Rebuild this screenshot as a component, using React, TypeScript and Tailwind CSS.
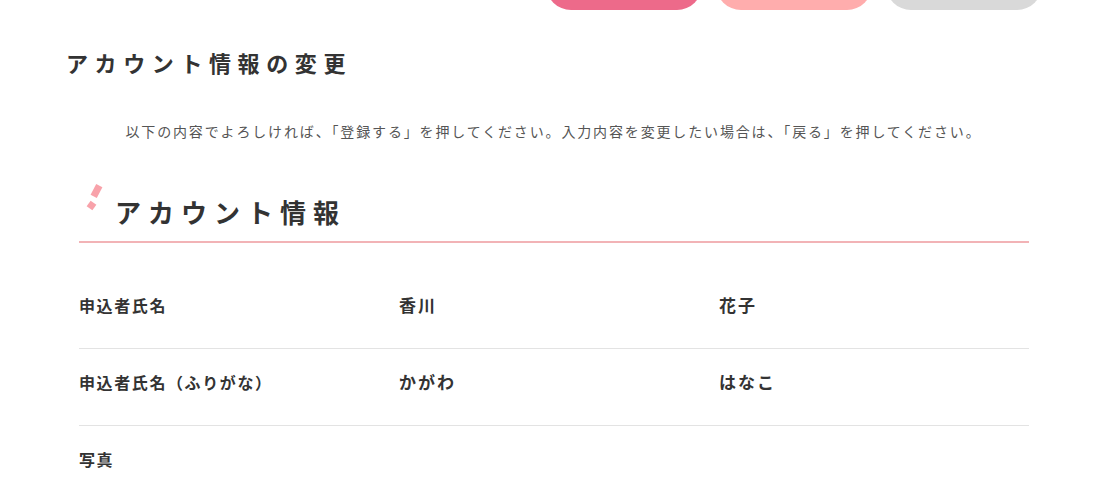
const rows = [
  { label: '申込者氏名', last: '香川', first: '花子' },
  { label: '申込者氏名（ふりがな）', last: 'かがわ', first: 'はなこ' },
  { label: '写真', last: '', first: '' },
]

const App = () => (
  <div className="h-[495px] w-[1113px] overflow-hidden bg-white text-[#333] font-['Noto_Sans_CJK_JP','Noto_Sans',sans-serif]">
    <div className="-mt-[40px] flex justify-end gap-[14px] pr-[71px]">
      <span className="block h-[50px] w-[156px] rounded-full bg-[#ed6a8a]" />
      <span className="block h-[50px] w-[156px] rounded-full bg-[#ffadad]" />
      <span className="block h-[50px] w-[156px] rounded-full bg-[#d9d9d9]" />
    </div>

    <h1 className="mt-[36px] pl-[66px] text-[22px] font-bold leading-[33px] tracking-[0.3em]">
      アカウント情報の変更
    </h1>

    <p className="mt-[40px] pr-[6px] text-center text-[14px] leading-[24px] tracking-[1.85px] text-[#555]">
      以下の内容でよろしければ、「登録する」を押してください。入力内容を変更したい場合は、「戻る」を押してください。
    </p>

    <div className="ml-[79px] w-[950px]">
      <div className="relative mt-[51px] border-b-2 border-[#f2b3b6] pb-[11px] pl-[36px]">
        <span className="absolute left-[14px] top-[-9px] h-[12px] w-[7px] rotate-[28deg] bg-[#f8a2aa]" />
        <span className="absolute left-[9px] top-[8px] h-[7px] w-[7px] rotate-[35deg] bg-[#f8a2aa]" />
        <h2 className="text-[26px] font-bold leading-[36px] tracking-[7px]">アカウント情報</h2>
      </div>

      <div className="mt-[29px]">
        {rows.map((r, i) => (
          <div
            key={r.label}
            className={`grid grid-cols-[320px_320px_310px] pt-[21px] pb-[31px] font-bold leading-[24px] ${
              i < rows.length - 1 ? 'border-b border-[#e3e3e3]' : ''
            }`}
          >
            <div className="text-[16px] tracking-[1.6px]">{r.label}</div>
            <div className="text-[17px] tracking-[2px]">{r.last}</div>
            <div className="text-[17px] tracking-[2px]">{r.first}</div>
          </div>
        ))}
      </div>
    </div>
  </div>
)

export default App
